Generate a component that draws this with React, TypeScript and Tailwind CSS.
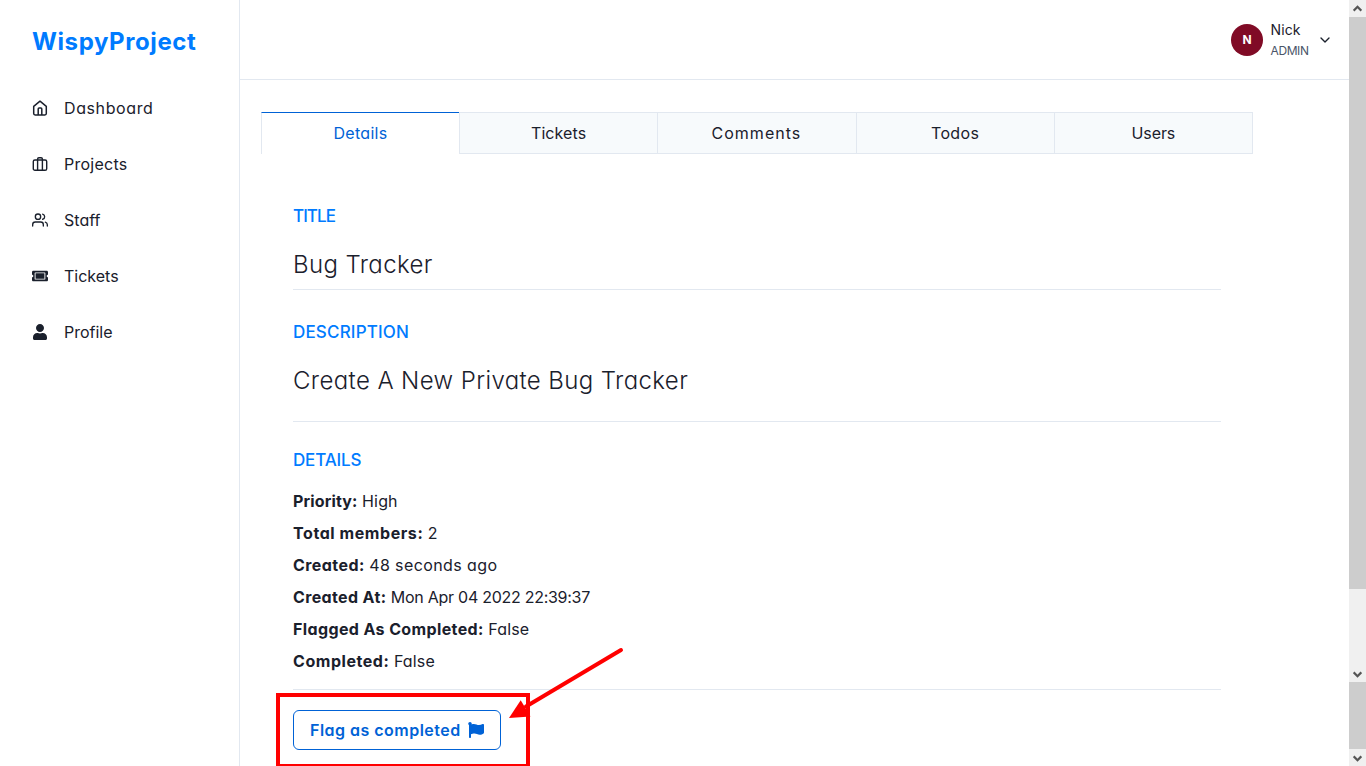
import type { ReactNode } from "react";
import { FiUsers, FiChevronDown } from "react-icons/fi";
import { FaTicketAlt, FaUser, FaFlag } from "react-icons/fa";

function HomeIcon() {
  return (
    <svg width="16" height="16" viewBox="0 0 16 16" fill="none" stroke="currentColor" strokeWidth="1.5" strokeLinejoin="round">
      <path d="M1.7 6.300 8 1.200l6.300 5.100v7.300c0 .800-.600 1.400-1.400 1.400H3.100c-.800 0-1.400-.600-1.400-1.400z" />
      <path d="M6.200 15V9c0-.600.300-.900.900-.900h1.800c.600 0 .900.300.900.900v6" />
    </svg>
  );
}

function CaseIcon() {
  return (
    <svg width="16" height="16" viewBox="0 0 16 16" fill="none" stroke="currentColor" strokeWidth="1.4">
      <rect x="1.300" y="4" width="13.400" height="10.300" rx="1.600" />
      <path d="M5.600 14.300V3c0-.800.500-1.300 1.300-1.300h2.200c.800 0 1.300.500 1.300 1.300v11.300" />
    </svg>
  );
}

function NavItem({ icon, tracking, children }: { icon: ReactNode; tracking: string; children: ReactNode }) {
  return (
    <a href="#" className="flex h-14 items-center gap-4 pl-8 text-base">
      <span className="w-4 shrink-0">{icon}</span>
      <span className={tracking}>{children}</span>
    </a>
  );
}

function Tab({ tracking, children }: { tracking: string; children: ReactNode }) {
  return (
    <button className="flex-1 border-y border-r border-[#e2e8f0] bg-[#f7fafc]">
      <span className={tracking}>{children}</span>
    </button>
  );
}

function Row({ label, labelTracking, value, tracking }: { label: string; labelTracking: string; value: string; tracking: string }) {
  return (
    <p className="flex h-8 items-center gap-[4.5px]">
      <span className={`font-bold ${labelTracking}`}>{label}</span>
      <span className={tracking}>{value}</span>
    </p>
  );
}

function ScrollArrow({ up = false }: { up?: boolean }) {
  return (
    <span className={`flex h-[17px] shrink-0 items-center justify-center bg-[#f0f0f0] ${up ? "" : "pt-px"}`}>
      <svg width="9" height="7" viewBox="0 0 9 7" fill="none" stroke="#555" strokeWidth="2.200">
        <path d={up ? "M.700 5.600 4.500 1.800l3.800 3.800" : "M.700 1.400 4.500 5.200l3.800-3.800"} />
      </svg>
    </span>
  );
}

export default function App() {
  return (
    <div className="relative flex h-[766px] w-[1366px] overflow-hidden whitespace-nowrap bg-white font-['Inter',sans-serif] text-base text-[#1a202c] [font-feature-settings:'cv11']">
      <aside className="w-60 shrink-0 border-r border-[#e2e8f0]">
        <h1 className="flex h-20 items-center pl-8 pt-1 text-2xl font-bold tracking-[0.6px] text-[#007bff]">WispyProject</h1>
        <nav>
          <NavItem icon={<HomeIcon />} tracking="tracking-[0.6px]">Dashboard</NavItem>
          <NavItem icon={<CaseIcon />} tracking="tracking-[0.26px]">Projects</NavItem>
          <NavItem icon={<FiUsers />} tracking="tracking-[0.03px]">Staff</NavItem>
          <NavItem icon={<FaTicketAlt />} tracking="tracking-normal">Tickets</NavItem>
          <NavItem icon={<FaUser />} tracking="tracking-normal">Profile</NavItem>
        </nav>
      </aside>

      <div className="flex min-w-0 flex-1 flex-col">
        <header className="flex h-20 shrink-0 items-center justify-end border-b border-[#e2e8f0] pr-4">
          <span className="mt-px flex size-8 items-center justify-center rounded-full bg-[#800b26] text-[12px] font-bold text-white">N</span>
          <div className="ml-[7.5px] w-[38.5px] pt-px">
            <p className="h-[21px] text-sm leading-5 tracking-[0.1px]">Nick</p>
            <p className="h-5 text-[12px] leading-5 tracking-[-0.4px] text-[#4a5568]">ADMIN</p>
          </div>
          <FiChevronDown className="ml-2 mt-px" />
        </header>

        <main className="w-[1013px] pl-[21px] pt-8">
          <div className="flex h-[42px]">
            <button className="flex-1 border-l border-t border-l-[#e2e8f0] border-t-[#0062d6] pb-px text-[#0062d6]">
              <span className="tracking-[0.3px]">Details</span>
            </button>
            <div className="flex w-[794px] border-l border-[#e2e8f0]">
              <Tab tracking="tracking-[0.1px]">Tickets</Tab>
              <Tab tracking="tracking-[1.02px] -ml-px">Comments</Tab>
              <Tab tracking="tracking-[0.35px]">Todos</Tab>
              <Tab tracking="tracking-[-0.1px]">Users</Tab>
            </div>
          </div>

          <div className="px-8 pt-[46px]">
            <section className="h-[90px] border-b border-[#e2e8f0]">
              <h2 className="h-8 text-[17px] font-medium leading-8 tracking-[-0.95px] text-[#007bff]">TITLE</h2>
              <p className="pt-[15px] text-2xl font-light leading-9 tracking-[0.38px]">Bug Tracker</p>
            </section>
            <section className="h-[132px] border-b border-[#e2e8f0] pt-[26px]">
              <h2 className="h-8 text-[17px] font-medium leading-8 tracking-[0.17px] text-[#007bff]">DESCRIPTION</h2>
              <p className="pt-[15px] text-2xl font-light leading-9 tracking-[0.39px]">Create A New Private Bug Tracker</p>
            </section>
            <section className="h-[268px] border-b border-[#e2e8f0] pt-[22px]">
              <h2 className="mb-[9px] h-8 text-[17px] font-medium leading-8 tracking-[-0.15px] text-[#007bff]">DETAILS</h2>
              <Row label="Priority:" labelTracking="tracking-[0.14px]" value="High" tracking="tracking-[0.15px]" />
              <Row label="Total members:" labelTracking="tracking-[0.57px]" value="2" tracking="tracking-normal" />
              <Row label="Created:" labelTracking="tracking-[0.43px]" value="48 seconds ago" tracking="tracking-[0.4px]" />
              <Row label="Created At:" labelTracking="tracking-[0.36px]" value="Mon Apr 04 2022 22:39:37" tracking="tracking-[-0.27px]" />
              <Row label="Flagged As Completed:" labelTracking="tracking-[0.38px]" value="False" tracking="tracking-[0.15px]" />
              <Row label="Completed:" labelTracking="tracking-[0.55px]" value="False" tracking="tracking-[0.15px]" />
            </section>
            <button className="mt-5 flex h-10 w-52 items-center justify-between rounded-md border border-[#0062d6] px-4 font-semibold text-[#0062d6]">
              <span className="tracking-[0.48px]">Flag as completed</span>
              <FaFlag />
            </button>
          </div>
        </main>
      </div>

      <div className="flex w-[17px] shrink-0 flex-col bg-[#f0f0f0]">
        <ScrollArrow up />
        <span className="h-[572px] bg-[#cdcdcd]" />
        <span className="flex-1" />
        <ScrollArrow />
        <span className="h-[67px] bg-[#cdcdcd]" />
        <ScrollArrow />
      </div>

      <div className="pointer-events-none absolute left-[276px] top-[693px] h-[75px] w-[254px] border-4 border-[#ff0000]" />
      <svg className="pointer-events-none absolute left-[500px] top-[640px]" width="130" height="90" viewBox="0 0 130 90">
        <path d="M121 10 26 66.500" stroke="#f00" strokeWidth="4" strokeLinecap="round" />
        <path d="M9 78 20.700 60.300 30.500 76.500z" fill="#f00" />
      </svg>
    </div>
  );
}
